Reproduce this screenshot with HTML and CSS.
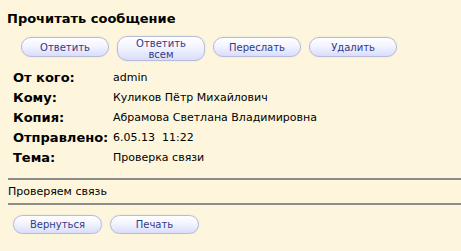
FILE: index.html
```html
<!DOCTYPE html>
<html lang="ru">
  <head>
    <meta charset="utf-8">
    <title>Прочитать сообщение</title>
    <link rel="stylesheet" href="styles.css">
  </head>
  <body>
    <h1 class="title">Прочитать сообщение</h1>
    <div class="actions top">
      <button class="btn">Ответить</button>
      <button class="btn">Ответить<br>всем</button>
      <button class="btn">Переслать</button>
      <button class="btn">Удалить</button>
    </div>
    <dl class="fields">
      <dt>От кого:</dt><dd>admin</dd>
      <dt>Кому:</dt><dd>Куликов Пётр Михайлович</dd>
      <dt>Копия:</dt><dd>Абрамова Светлана Владимировна</dd>
      <dt>Отправлено:</dt><dd>6.05.13&nbsp;&nbsp;11:22</dd>
      <dt>Тема:</dt><dd>Проверка связи</dd>
    </dl>
    <div class="body-text">Проверяем связь</div>
    <div class="actions bottom">
      <button class="btn">Вернуться</button>
      <button class="btn">Печать</button>
    </div>
  </body>
</html>
```

FILE: styles.css
```css
html { background: #fdf6dc; color: #000; font-family: "DejaVu Sans", Verdana, sans-serif; }
body { margin: 0; padding: 0; }

.title { margin: 0; padding: 11px 0 0 7px; font-size: 13px; line-height: 15px; font-weight: bold; }

.actions { display: flex; align-items: flex-start; gap: 8px; }
.actions.top { padding: 11px 0 0 21px; }
.actions.bottom { padding: 10px 0 0 13px; }

.btn {
  width: 88px; height: 20px; margin: 0; padding: 0;
  border: 1px solid #b7bbd9; border-radius: 10px;
  background: linear-gradient(#ffffff 0%, #f3f4ff 45%, #d9ddf9 100%);
  box-shadow: 0 0 2px #d9dcf2;
  color: #2f3a8a; font-family: "DejaVu Sans", Verdana, sans-serif; font-size: 10px; line-height: 11px;
}
.actions.top .btn:nth-child(2) { height: 25px; margin-top: -1px; }
.actions.bottom .btn { width: 89px; height: 19px; }

.fields { display: grid; grid-template-columns: 100px auto; margin: 7px 0 0 13px; }
.fields dt { font-size: 13px; font-weight: bold; line-height: 20px; }
.fields dd { margin: 0; font-size: 11px; line-height: 20px; }

.body-text {
  margin: 10px 0 0 8px; padding: 5px 0 5px 0;
  border-top: 2px solid #8c8c8c; border-bottom: 2px solid #8c8c8c;
  font-size: 11px; line-height: 13px;
}
```
